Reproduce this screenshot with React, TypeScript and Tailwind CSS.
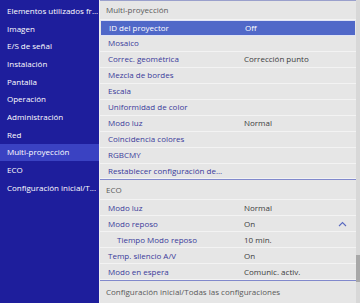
import React from "react";

type Row = { label: string; value?: string; indent?: boolean; selected?: boolean; chevron?: boolean };

const menu = [
  "Elementos utilizados fr...",
  "Imagen",
  "E/S de señal",
  "Instalación",
  "Pantalla",
  "Operación",
  "Administración",
  "Red",
  "Multi-proyección",
  "ECO",
  "Configuración inicial/T...",
];

const multi: Row[] = [
  { label: "ID del proyector", value: "Off", selected: true },
  { label: "Mosaico" },
  { label: "Correc. geométrica", value: "Corrección punto" },
  { label: "Mezcla de bordes" },
  { label: "Escala" },
  { label: "Uniformidad de color" },
  { label: "Modo luz", value: "Normal" },
  { label: "Coincidencia colores" },
  { label: "RGBCMY" },
  { label: "Restablecer configuración de..." },
];

const eco: Row[] = [
  { label: "Modo luz", value: "Normal" },
  { label: "Modo reposo", value: "On", chevron: true },
  { label: "Tiempo Modo reposo", value: "10 min.", indent: true },
  { label: "Temp. silencio A/V", value: "On" },
  { label: "Modo en espera", value: "Comunic. activ." },
];

const SettingRow = ({ row }: { row: Row }) => (
  <div
    className={
      row.selected
        ? "flex items-center h-[16px] bg-[#5068c8] text-white border-y border-[#dfe3f5] mx-[1px]"
        : "flex items-center h-[16px] border-b border-[#f3f3f3]"
    }
  >
    <div
      className={`${row.indent ? "pl-[17px]" : "pl-[8px]"} w-[144px] whitespace-nowrap ${
        row.selected ? "text-white" : "text-[#3a3a9a]"
      }`}
    >
      {row.label}
    </div>
    <div className={`flex-1 whitespace-nowrap ${row.selected ? "text-white" : "text-[#3c3c3c]"}`}>
      {row.value}
    </div>
    {row.chevron && (
      <svg width="9" height="6" viewBox="0 0 9 6" className="mr-[9px]">
        <path d="M1 5 L4.5 1.5 L8 5" fill="none" stroke="#5a6ac0" strokeWidth="1.1" />
      </svg>
    )}
  </div>
);

export default function App() {
  return (
    <div
      className="flex w-[360px] h-[303px] overflow-hidden text-[8px] leading-none"
      style={{ fontFamily: '"Open Sans", "Noto Sans", sans-serif' }}
    >
      <div className="w-[99px] bg-[#1e1e9c] pt-[2px] flex flex-col">
        {menu.map((m) => (
          <div
            key={m}
            className={`h-[17.7px] flex items-center pl-[7px] whitespace-nowrap overflow-hidden ${
              m === "Multi-proyección" ? "bg-[#3a42c2] text-white" : "text-white"
            }`}
          >
            {m}
          </div>
        ))}
      </div>
      <div className="flex-1 flex bg-[#e6e6e6] border-l border-[#f0f0f0]">
        <div className="flex-1 flex flex-col border-t border-[#9aa0cc]">
          <div className="h-[19px] flex items-center pl-[6px] text-[#5a5a5a] border-b border-[#f3f3f3]">
            Multi-proyección
          </div>
          {multi.map((r) => (
            <SettingRow key={r.label} row={r} />
          ))}
          <div className="h-[1px] bg-[#8189cc]" />
          <div className="h-[20px] flex items-center pl-[6px] text-[#5a5a5a] border-b border-[#f3f3f3]">
            ECO
          </div>
          {eco.map((r) => (
            <SettingRow key={r.label} row={r} />
          ))}
          <div className="h-[1px] bg-[#8189cc]" />
          <div className="h-[22px] flex items-center pl-[6px] text-[#5a5a5a] whitespace-nowrap">
            Configuración inicial/Todas las configuraciones
          </div>
        </div>
        <div className="w-[4px] flex flex-col bg-[#d8d8d8]">
          <div className="h-[255px]" />
          <div className="h-[27px] bg-[#a8a8a8]" />
        </div>
      </div>
    </div>
  );
}
